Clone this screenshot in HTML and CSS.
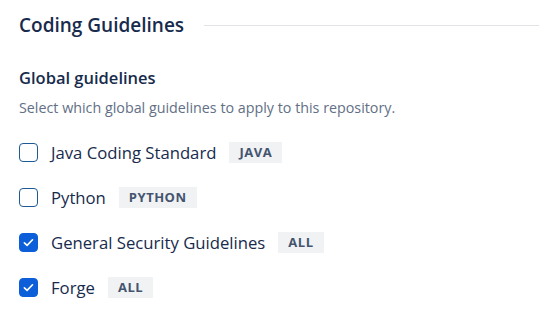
FILE: index.html
```html
<!DOCTYPE html>
<html>
<head>
  <meta charset="UTF-8">
  <title>Coding Guidelines</title>
  <link rel="stylesheet" href="styles.css">
</head>
<body>
  <div class="section-head">
    <h2>Coding Guidelines</h2>
    <div class="rule"></div>
  </div>

  <h3>Global guidelines</h3>
  <p class="hint">Select which global guidelines to apply to this repository.</p>

  <ul class="options">
    <li class="option">
      <span class="box"></span>
      <span class="label">Java Coding Standard</span>
      <span class="tag">Java</span>
    </li>
    <li class="option">
      <span class="box"></span>
      <span class="label">Python</span>
      <span class="tag">Python</span>
    </li>
    <li class="option">
      <span class="box checked">
        <svg width="13" height="13" viewBox="0 0 12 12"><path d="M2.2 6.3l2.5 2.4 5-5.2" fill="none" stroke="#fff" stroke-width="1.5" stroke-linecap="round" stroke-linejoin="round"/></svg>
      </span>
      <span class="label">General Security Guidelines</span>
      <span class="tag">All</span>
    </li>
    <li class="option">
      <span class="box checked">
        <svg width="13" height="13" viewBox="0 0 12 12"><path d="M2.2 6.3l2.5 2.4 5-5.2" fill="none" stroke="#fff" stroke-width="1.5" stroke-linecap="round" stroke-linejoin="round"/></svg>
      </span>
      <span class="label">Forge</span>
      <span class="tag">All</span>
    </li>
  </ul>
</body>
</html>
```

FILE: styles.css
```css
body {
  margin: 0;
  padding: 12px 19px;
  font-family: "Open Sans", "Noto Sans", sans-serif;
  color: #172b4d;
  background: #fff;
}
.section-head {
  display: flex;
  align-items: center;
  gap: 20px;
}
h2 {
  margin: 0;
  font-size: 19px;
  font-weight: 600;
  line-height: 26px;
}
.rule {
  flex: 1;
  height: 1px;
  background: #e2e3e6;
  margin-right: -19px;
}
h3 {
  margin: 28px 0 0;
  font-size: 16.5px;
  font-weight: 600;
  line-height: 24px;
}
.hint {
  margin: 8px 0 0;
  font-size: 14.3px;
  line-height: 20px;
  color: #626f86;
}
.options {
  list-style: none;
  margin: 12px 0 0;
  padding: 0;
}
.option {
  display: flex;
  align-items: center;
  height: 45px;
}
.box {
  box-sizing: border-box;
  width: 19px;
  height: 19px;
  border: 1.5px solid #1d5a96;
  border-radius: 4px;
  display: flex;
  align-items: center;
  justify-content: center;
  flex: none;
}
.box.checked {
  background: #0c5fd9;
  border-color: #0c5fd9;
}
.label {
  margin-left: 13px;
  font-size: 16.7px;
}
.tag {
  margin-left: 13px;
  background: #f1f2f4;
  color: #44546f;
  font-size: 13px;
  font-weight: 700;
  text-transform: uppercase;
  padding: 0 10px;
  line-height: 21px;
  letter-spacing: 0.5px;
}
```
